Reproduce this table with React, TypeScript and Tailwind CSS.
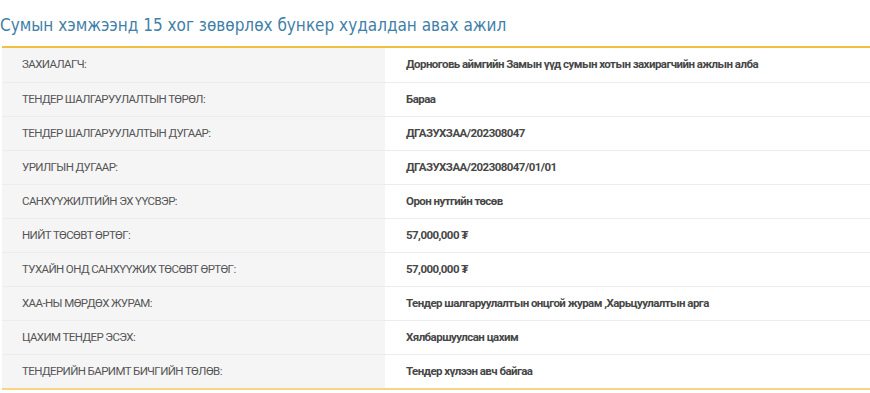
const rows: [string, string][] = [
  ["ЗАХИАЛАГЧ:", "Дорноговь аймгийн Замын үүд сумын хотын захирагчийн ажлын алба"],
  ["ТЕНДЕР ШАЛГАРУУЛАЛТЫН ТӨРӨЛ:", "Бараа"],
  ["ТЕНДЕР ШАЛГАРУУЛАЛТЫН ДУГААР:", "ДГАЗУХЗАА/202308047"],
  ["УРИЛГЫН ДУГААР:", "ДГАЗУХЗАА/202308047/01/01"],
  ["САНХҮҮЖИЛТИЙН ЭХ ҮҮСВЭР:", "Орон нутгийн төсөв"],
  ["НИЙТ ТӨСӨВТ ӨРТӨГ:", "57,000,000 ₮"],
  ["ТУХАЙН ОНД САНХҮҮЖИХ ТӨСӨВТ ӨРТӨГ:", "57,000,000 ₮"],
  ["ХАА-НЫ МӨРДӨХ ЖУРАМ:", "Тендер шалгаруулалтын онцгой журам ,Харьцуулалтын арга"],
  ["ЦАХИМ ТЕНДЕР ЭСЭХ:", "Хялбаршуулсан цахим"],
  ["ТЕНДЕРИЙН БАРИМТ БИЧГИЙН ТӨЛӨВ:", "Тендер хүлээн авч байгаа"],
];

export default function App() {
  return (
    <div className="w-[870px] h-[393px] bg-white font-['Roboto',sans-serif]">
      <h1 className="pt-[14px] h-[46px] text-[17px] leading-[22px] text-[#3f80a8] font-normal font-['DejaVu_Sans_Condensed',sans-serif]">
        Сумын хэмжээнд 15 хог зөвөрлөх бункер худалдан авах ажил
      </h1>
      <div className="ml-[2px] border-t-2 border-[#f0c040] border-b-2 border-b-[#f6d682]">
        {rows.map(([label, value], i) => (
          <div
            key={label}
            className={`flex h-[34px] ${i > 0 ? "border-t border-[#ececec]" : ""}`}
          >
            <div className="w-[383px] shrink-0 bg-[#f5f5f5] pl-[20px] flex items-center text-[11.5px] tracking-[-0.6px] text-[#555]">
              {label}
            </div>
            <div className="flex-1 pl-[21px] flex items-center text-[11.5px] tracking-[-0.55px] font-bold text-[#474747]">
              {value}
            </div>
          </div>
        ))}
      </div>
    </div>
  );
}
